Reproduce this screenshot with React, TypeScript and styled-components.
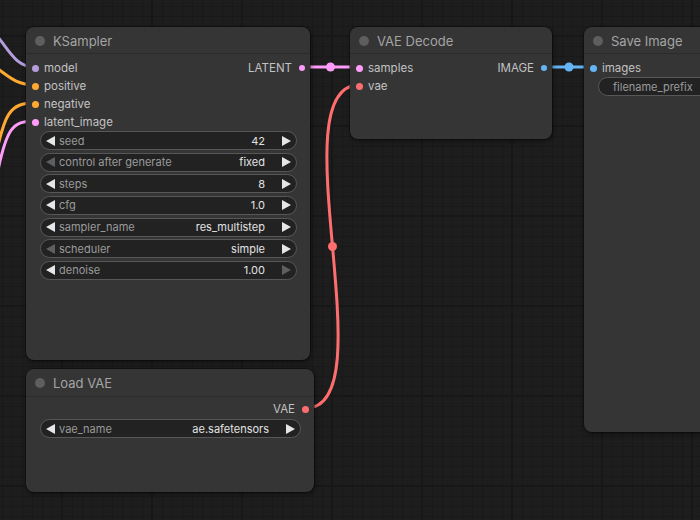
import React from 'react';
import styled, { createGlobalStyle } from 'styled-components';

const Global = createGlobalStyle`
  html, body { margin: 0; padding: 0; background: #1c1c1c; }
  body { font-family: Inter, "Liberation Sans", sans-serif; }
`;

const Canvas = styled.div`
  position: relative;
  width: 700px;
  height: 520px;
  overflow: hidden;
  background-color: #1d1d1d;
  background-image:
    linear-gradient(to right, #171717 2px, transparent 2px),
    linear-gradient(to bottom, #171717 2px, transparent 2px),
    linear-gradient(to right, rgba(0, 0, 0, 0.12) 1px, transparent 1px),
    linear-gradient(to bottom, rgba(0, 0, 0, 0.12) 1px, transparent 1px);
  background-size: 90px 90px, 90px 90px, 10px 10px, 10px 10px;
  background-position: 61px 0, 0 35px, 2px 0, 0 6px;
`;

const LinkLayer = styled.svg`
  position: absolute;
  left: 0;
  top: 0;
  width: 700px;
  height: 520px;
  pointer-events: none;
`;

const Node = styled.div<{ $x: number; $y: number; $w: number; $h: number }>`
  position: absolute;
  left: ${(p) => p.$x}px;
  top: ${(p) => p.$y}px;
  width: ${(p) => p.$w}px;
  height: ${(p) => p.$h}px;
  box-sizing: border-box;
  background: #353535;
  border-radius: 8px;
  box-shadow: 0 0 0 1px rgba(0, 0, 0, 0.3), 1px 2px 5px rgba(0, 0, 0, 0.45);
  display: flex;
  flex-direction: column;
  overflow: hidden;
`;

const Title = styled.div<{ $h: number }>`
  height: ${(p) => p.$h}px;
  flex: none;
  box-sizing: border-box;
  border-bottom: 1px solid #2b2b2b;
  display: flex;
  align-items: center;
  gap: 8px;
  padding: 1px 0 0 9px;
  color: #a4a4a4;
  font-size: 13px;
`;

const TitleDot = styled.span`
  width: 10px;
  height: 10px;
  border-radius: 50%;
  background: #5e5e5e;
`;

const Body = styled.div<{ $pt: number }>`
  display: flex;
  flex-direction: column;
  padding-top: ${(p) => p.$pt}px;
`;

const SlotRow = styled.div`
  height: 18px;
  display: flex;
  align-items: center;
  justify-content: space-between;
  font-size: 11.5px;
  color: #c2c2c2;
`;

const SlotIn = styled.div`
  display: flex;
  align-items: center;
  gap: 5px;
  padding-left: 6px;
`;

const SlotOut = styled.div`
  display: flex;
  align-items: center;
  gap: 7px;
  padding-right: 5px;
  margin-left: auto;
`;

const Dot = styled.span<{ $c: string; $s?: number }>`
  width: ${(p) => p.$s ?? 7}px;
  height: ${(p) => p.$s ?? 7}px;
  border-radius: 50%;
  background: ${(p) => p.$c};
  flex: none;
`;

const Widgets = styled.div<{ $mt: number }>`
  display: flex;
  flex-direction: column;
  gap: 2.67px;
  padding: 0 13px 0 14px;
  margin-top: ${(p) => p.$mt}px;
`;

const Widget = styled.div`
  height: 19px;
  box-sizing: border-box;
  border: 1px solid #575757;
  border-radius: 10px;
  background: #222222;
  display: flex;
  align-items: center;
  padding: 0 5px 0 5px;
  font-size: 11px;
`;

const WLabel = styled.span<{ $pl?: number }>`
  color: #9a9a9a;
  padding-left: ${(p) => p.$pl ?? 4}px;
  flex: 1;
  white-space: nowrap;
`;

const WValue = styled.span`
  color: #e2e2e2;
  padding-right: 17px;
  white-space: nowrap;
`;

const ArrowSvg = styled.svg`
  flex: none;
  display: block;
`;

const Arrow = ({ dir, dim }: { dir: 'l' | 'r'; dim?: boolean }) => (
  <ArrowSvg width="9" height="10" viewBox="0 0 9 10">
    <polygon
      points={dir === 'l' ? '9,0 9,10 0,5' : '0,0 0,10 9,5'}
      fill={dim ? '#5f5f5f' : '#e6e6e6'}
    />
  </ArrowSvg>
);

const C = {
  model: '#b39ddb',
  cond: '#ffa931',
  latent: '#ff9cf9',
  vae: '#ff6e6e',
  image: '#64b5f6',
};

type W = { label: string; value: string; dimL?: boolean; dimR?: boolean };

const ksWidgets: W[] = [
  { label: 'seed', value: '42' },
  { label: 'control after generate', value: 'fixed', dimL: true },
  { label: 'steps', value: '8' },
  { label: 'cfg', value: '1.0' },
  { label: 'sampler_name', value: 'res_multistep' },
  { label: 'scheduler', value: 'simple', dimL: true },
  { label: 'denoise', value: '1.00', dimR: true },
];

const ComboWidget = ({ w }: { w: W }) => (
  <Widget>
    <Arrow dir="l" dim={w.dimL} />
    <WLabel>{w.label}</WLabel>
    <WValue>{w.value}</WValue>
    <Arrow dir="r" dim={w.dimR} />
  </Widget>
);

export default function App() {
  return (
    <>
      <Global />
      <Canvas>
        <LinkLayer viewBox="0 0 700 520">
          <path d="M -14 24 C 8 44, 12 67, 35 67" stroke={C.model} strokeWidth="3" fill="none" />
          <path d="M -20 58 C 5 70, 10 85, 35 85" stroke={C.cond} strokeWidth="3" fill="none" />
          <path d="M -6 165 C 4 112, 10 103, 35 103" stroke={C.cond} strokeWidth="3" fill="none" />
          <path d="M -4 180 C 6 128, 12 121, 35 121" stroke={C.latent} strokeWidth="3" fill="none" />
          <path d="M 302 67 L 359 67" stroke={C.latent} strokeWidth="3" fill="none" />
          <circle cx="330.5" cy="67" r="4.5" fill={C.latent} />
          <path d="M 545 67 L 593 67" stroke={C.image} strokeWidth="3" fill="none" />
          <circle cx="569" cy="67" r="4.5" fill={C.image} />
          <path d="M 306 408 C 388 408, 277 85, 359 85" stroke={C.vae} strokeWidth="3" fill="none" />
          <circle cx="332.5" cy="246.5" r="4.5" fill={C.vae} />
        </LinkLayer>

        <Node $x={26} $y={27} $w={284} $h={333}>
          <Title $h={27}>
            <TitleDot />
            KSampler
          </Title>
          <Body $pt={5}>
            <SlotRow>
              <SlotIn>
                <Dot $c={C.model} />
                model
              </SlotIn>
              <SlotOut>
                LATENT
                <Dot $c={C.latent} $s={6} />
              </SlotOut>
            </SlotRow>
            <SlotRow>
              <SlotIn>
                <Dot $c={C.cond} />
                positive
              </SlotIn>
            </SlotRow>
            <SlotRow>
              <SlotIn>
                <Dot $c={C.cond} />
                negative
              </SlotIn>
            </SlotRow>
            <SlotRow>
              <SlotIn>
                <Dot $c={C.latent} />
                latent_image
              </SlotIn>
            </SlotRow>
            <Widgets $mt={0}>
              {ksWidgets.map((w) => (
                <ComboWidget key={w.label} w={w} />
              ))}
            </Widgets>
          </Body>
        </Node>

        <Node $x={26} $y={369} $w={288} $h={123}>
          <Title $h={28}>
            <TitleDot />
            Load VAE
          </Title>
          <Body $pt={3}>
            <SlotRow>
              <SlotOut>
                VAE
                <Dot $c={C.vae} $s={7} />
              </SlotOut>
            </SlotRow>
            <Widgets $mt={1}>
              <ComboWidget w={{ label: 'vae_name', value: 'ae.safetensors' }} />
            </Widgets>
          </Body>
        </Node>

        <Node $x={350} $y={27} $w={202} $h={112}>
          <Title $h={27}>
            <TitleDot />
            VAE Decode
          </Title>
          <Body $pt={5}>
            <SlotRow>
              <SlotIn>
                <Dot $c={C.latent} />
                samples
              </SlotIn>
              <SlotOut>
                IMAGE
                <Dot $c={C.image} $s={6} />
              </SlotOut>
            </SlotRow>
            <SlotRow>
              <SlotIn>
                <Dot $c={C.vae} />
                vae
              </SlotIn>
            </SlotRow>
          </Body>
        </Node>

        <Node $x={584} $y={27} $w={266} $h={405}>
          <Title $h={27}>
            <TitleDot />
            Save Image
          </Title>
          <Body $pt={5}>
            <SlotRow>
              <SlotIn>
                <Dot $c={C.image} />
                images
              </SlotIn>
            </SlotRow>
            <Widgets $mt={0}>
              <Widget>
                <WLabel $pl={9}>filename_prefix</WLabel>
              </Widget>
            </Widgets>
          </Body>
        </Node>
      </Canvas>
    </>
  );
}
